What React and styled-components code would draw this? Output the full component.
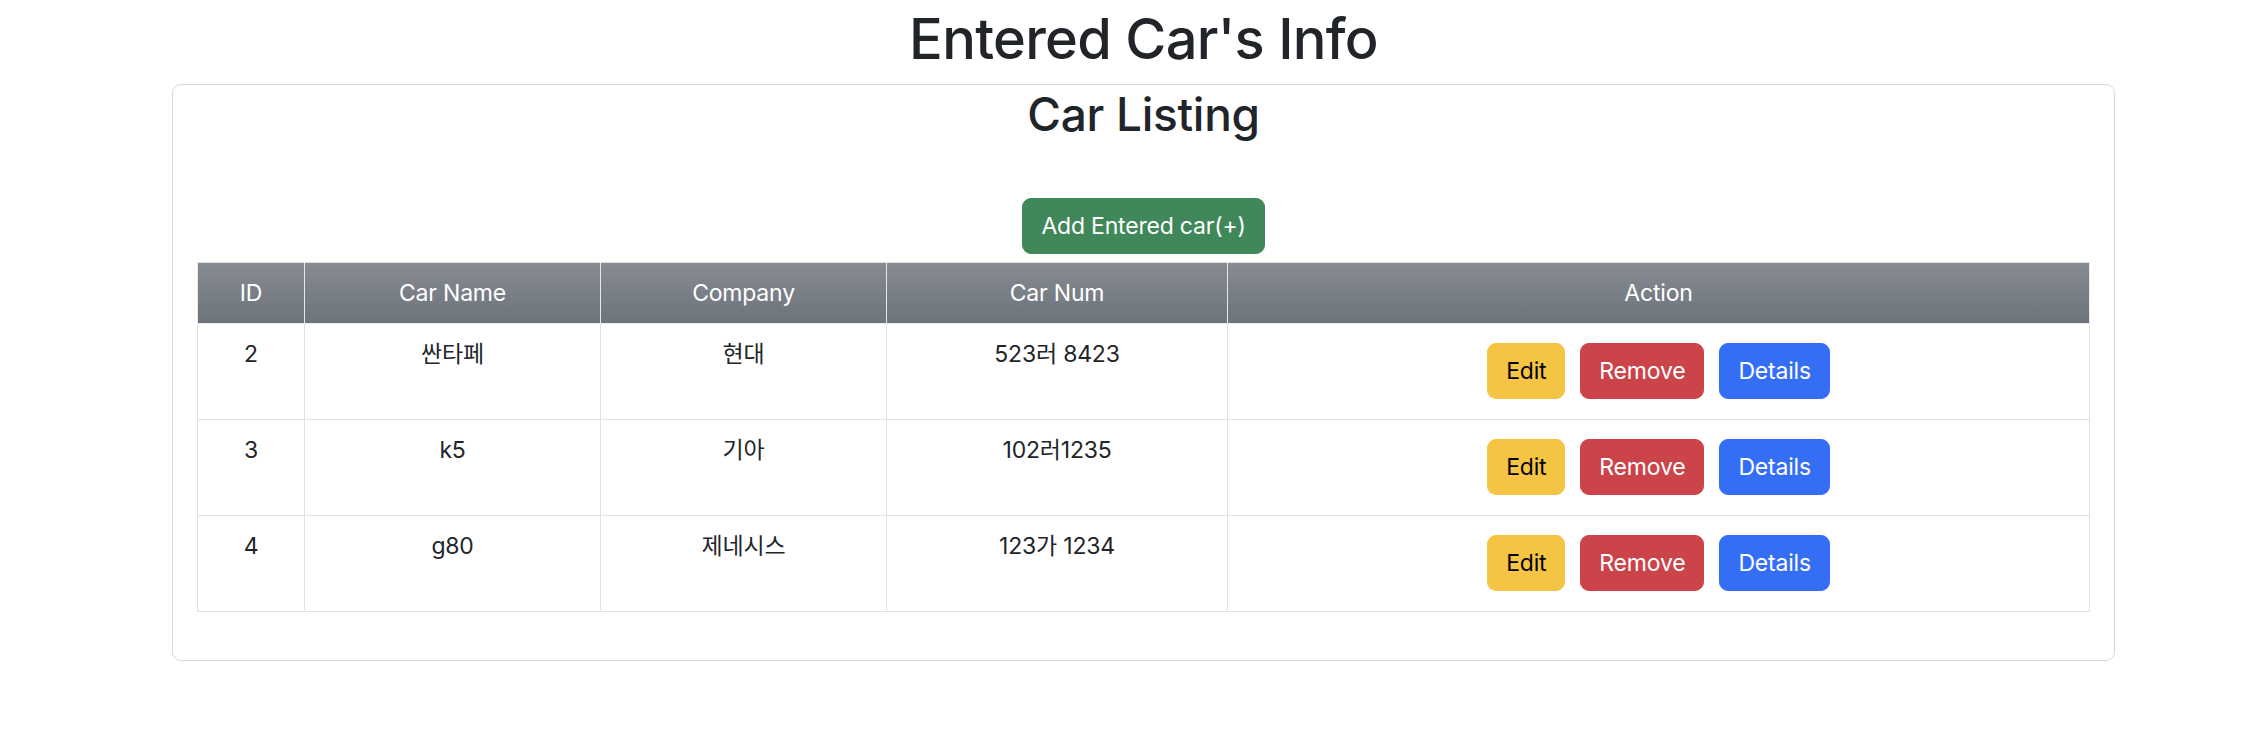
import React from "react";
import styled, { createGlobalStyle } from "styled-components";

const GlobalStyle = createGlobalStyle`
  html, body { margin: 0; padding: 0; background: #ffffff; }
  body {
    font-family: Inter, "Noto Sans", "Noto Sans CJK KR", sans-serif;
    color: #212529;
    -webkit-font-smoothing: antialiased;
  }
  * { box-sizing: border-box; }
`;

const Page = styled.div`
  padding: 0 141px 0 172px;
`;

const Title = styled.h1`
  margin: 0 0 9px;
  padding-top: 3px;
  font-size: 56px;
  font-weight: 500;
  line-height: 72px;
  text-align: center;
  letter-spacing: -0.7px;
`;

const Card = styled.section`
  border: 1px solid #d8d8d8;
  border-radius: 9px;
  padding: 0 24px 24px;
`;

const CardTitle = styled.h2`
  margin: 0;
  font-size: 46px;
  font-weight: 500;
  line-height: 58px;
  text-align: center;
  letter-spacing: -0.3px;
`;

const Toolbar = styled.div`
  display: flex;
  justify-content: center;
  margin: 55px 0 8px;
`;

const Button = styled.button`
  font-family: inherit;
  font-size: 23px;
  line-height: 36px;
  padding: 9px 18px;
  border: 1px solid ${(p) => p.$bg};
  border-radius: 9px;
  background: ${(p) => p.$bg};
  color: ${(p) => p.$fg || "#ffffff"};
  cursor: pointer;
  white-space: nowrap;
  letter-spacing: -0.2px;
`;

const Table = styled.table`
  width: 100%;
  border-collapse: collapse;
  table-layout: fixed;
  font-size: 23px;
  margin-bottom: 24px;
`;

const HeadRow = styled.tr`
  background: linear-gradient(180deg, #878b92 0%, #6c737b 100%);
`;

const Th = styled.th`
  padding: 12px;
  line-height: 36px;
  font-weight: 400;
  color: #ffffff;
  text-align: center;
  border: 1px solid #e6e8ea;
  border-top-color: #dee2e6;
  letter-spacing: -0.2px;
`;

const Td = styled.td`
  padding: 12px;
  line-height: 36px;
  height: 96px;
  text-align: center;
  vertical-align: top;
  border: 1px solid #dee2e6;
  letter-spacing: -0.2px;
`;

const Actions = styled.div`
  display: flex;
  justify-content: center;
  gap: 15px;
  margin: 7px 0 7px;
`;

const cars = [
  { id: 2, name: "싼타페", company: "현대", num: "523러 8423" },
  { id: 3, name: "k5", company: "기아", num: "102러1235" },
  { id: 4, name: "g80", company: "제네시스", num: "123가 1234" },
];

export default function App() {
  return (
    <>
      <GlobalStyle />
      <Page>
        <Title>Entered Car's Info</Title>
        <Card>
          <CardTitle>Car Listing</CardTitle>
          <Toolbar>
            <Button $bg="#40875a">Add Entered car(+)</Button>
          </Toolbar>
          <Table>
            <colgroup>
              <col style={{ width: "107px" }} />
              <col style={{ width: "296px" }} />
              <col style={{ width: "286px" }} />
              <col style={{ width: "341px" }} />
              <col />
            </colgroup>
            <thead>
              <HeadRow>
                <Th>ID</Th>
                <Th>Car Name</Th>
                <Th>Company</Th>
                <Th>Car Num</Th>
                <Th>Action</Th>
              </HeadRow>
            </thead>
            <tbody>
              {cars.map((c) => (
                <tr key={c.id}>
                  <Td>{c.id}</Td>
                  <Td>{c.name}</Td>
                  <Td>{c.company}</Td>
                  <Td>{c.num}</Td>
                  <Td>
                    <Actions>
                      <Button $bg="#f5c444" $fg="#000000">Edit</Button>
                      <Button $bg="#cb444a">Remove</Button>
                      <Button $bg="#346ef5">Details</Button>
                    </Actions>
                  </Td>
                </tr>
              ))}
            </tbody>
          </Table>
        </Card>
      </Page>
    </>
  );
}
